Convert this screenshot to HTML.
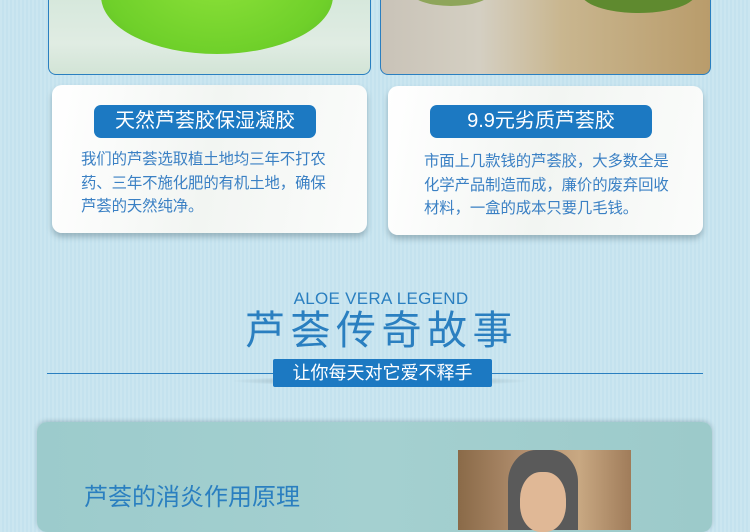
<!DOCTYPE html><html><head><meta charset="utf-8"><style>
*{margin:0;padding:0;box-sizing:border-box}
body{width:750px;height:525px;overflow:hidden;position:relative;background:#c4e2ee;background-image:repeating-linear-gradient(90deg,rgba(255,255,255,0.12) 0 2px,rgba(0,0,0,0) 2px 4px);font-family:"Liberation Sans","Noto Sans CJK SC",sans-serif}
.a{position:absolute}
.ph{border:1px solid #2a7fc0;border-top:none;border-radius:0 0 8px 8px;overflow:hidden}
.card{background:linear-gradient(100deg,#fff 0%,#f2f5f2 50%,#fbfcfb 100%);border-radius:10px;box-shadow:0 4px 6px rgba(60,90,100,.35)}
.pill{background:#1c79c2;border-radius:7px;color:#fff;font-size:20px;text-align:center;line-height:32px}
.txt{color:#3a80c4;font-size:15.4px;line-height:23.5px;letter-spacing:-0.1px}
</style></head><body>
<div class="a ph" style="left:48px;top:-2px;width:323px;height:77px;background:linear-gradient(180deg,#d6e8dc,#e0ece3 60%,#d2e4d6)">
 <div class="a" style="left:52px;top:-60px;width:232px;height:116px;border-radius:50%;background:radial-gradient(ellipse at 50% 30%,#8ee23a,#6fd02a 70%,#5cb826)"></div>
</div>
<div class="a ph" style="left:380px;top:-2px;width:331px;height:77px;background:linear-gradient(90deg,#c9c3b8 0%,#d4cfc2 30%,#c9b68f 55%,#b99c6b 100%)">
 <div class="a" style="left:30px;top:-20px;width:80px;height:28px;border-radius:50%;background:#8ea55a"></div>
 <div class="a" style="left:200px;top:-25px;width:115px;height:40px;border-radius:50%;background:#5f8a2f"></div>
</div>
<div class="a card" style="left:52px;top:85px;width:315px;height:148px"></div>
<div class="a pill" style="left:94px;top:105px;width:222px;height:33px">天然芦荟胶保湿凝胶</div>
<div class="a txt" style="left:81px;top:148px;width:252px">我们的芦荟选取植土地均三年不打农药、三年不施化肥的有机土地，确保芦荟的天然纯净。</div>
<div class="a card" style="left:388px;top:86px;width:315px;height:149px"></div>
<div class="a pill" style="left:430px;top:105px;width:222px;height:33px">9.9元劣质芦荟胶</div>
<div class="a txt" style="left:424px;top:150px;width:252px">市面上几款钱的芦荟胶，大多数全是化学产品制造而成，廉价的废弃回收材料，一盒的成本只要几毛钱。</div>
<div class="a" style="left:0;width:750px;top:289px;text-align:center;color:#2a7fc0;font-size:17px;letter-spacing:.3px;padding-left:12px">ALOE VERA LEGEND</div>
<div class="a" style="left:245px;width:290px;top:306px;color:#2a7fc0;font-size:40px;letter-spacing:5.5px;line-height:50px;white-space:nowrap">芦荟传奇故事</div>
<div class="a" style="left:47px;top:373px;width:656px;height:1px;background:#2a7fc0"></div>
<div class="a" style="left:230px;top:376px;width:300px;height:10px;border-radius:50%;background:radial-gradient(ellipse,rgba(40,60,70,.45),rgba(40,60,70,0) 70%)"></div>
<div class="a" style="left:273px;top:359px;width:219px;height:28px;background:#1c79c2;border-radius:2px;color:#fff;font-size:18px;line-height:28px;text-align:center">让你每天对它爱不释手</div>
<div class="a" style="left:37px;top:422px;width:675px;height:110px;border-radius:10px;background:linear-gradient(90deg,#9ccbcc,#a4d0d0 50%,#9ccaca);box-shadow:0 -1px 4px rgba(60,90,100,.3)"></div>
<div class="a" style="left:84px;top:477px;color:#2a7fc0;font-size:24px">芦荟的消炎作用原理</div>
<div class="a" style="left:458px;top:450px;width:173px;height:80px;background:linear-gradient(90deg,#8a6a48,#b39070 40%,#c8a882 70%,#a07c5a)">
 <div class="a" style="left:50px;top:0;width:70px;height:80px;border-radius:40% 40% 0 0;background:#5a5a5a"></div>
 <div class="a" style="left:62px;top:22px;width:46px;height:60px;border-radius:45%;background:#e0b896"></div>
</div>
</body></html>
